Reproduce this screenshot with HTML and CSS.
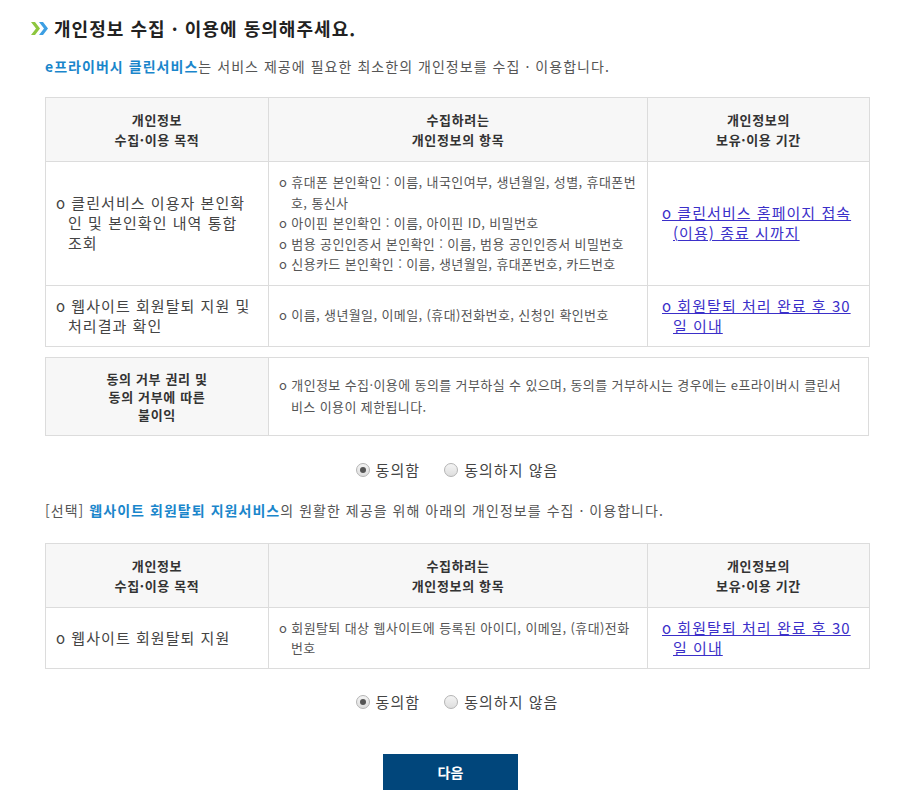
FILE: index.html
```html
<!DOCTYPE html>
<html lang="ko">
<head>
	<meta charset="UTF-8">
	<title>개인정보 수집 · 이용 동의</title>
	<link rel="stylesheet" href="styles.css">
</head>
<body>

	<div class="agree-wrap">
		<h2 class="agree-title">
			<svg class="title-icon" width="17" height="13" viewBox="0 0 17 13">
				<polygon points="0,0 4,0 9,6.5 4,13 0,13 5,6.5" fill="#8dc63f"/>
				<polygon points="8,0 12,0 17,6.5 12,13 8,13 13,6.5" fill="#3d9fe3"/>
			</svg>
			개인정보 수집 · 이용에 동의해주세요.
		</h2>

		<p class="desc"><strong class="point">e프라이버시 클린서비스</strong>는 서비스 제공에 필요한 최소한의 개인정보를 수집 · 이용합니다.</p>

		<table class="tbl-agree">
			<colgroup>
				<col class="col-purpose">
				<col class="col-items">
				<col class="col-period">
			</colgroup>
			<thead>
				<tr>
					<th>개인정보<br>수집·이용 목적</th>
					<th>수집하려는<br>개인정보의 항목</th>
					<th>개인정보의<br>보유·이용 기간</th>
				</tr>
			</thead>
			<tbody>
				<tr>
					<td class="purpose">o 클린서비스 이용자 본인확인 및 본인확인 내역 통합 조회</td>
					<td class="items">
						<p>o 휴대폰 본인확인 : 이름, 내국인여부, 생년월일, 성별, 휴대폰번호, 통신사</p>
						<p>o 아이핀 본인확인 : 이름, 아이핀 ID, 비밀번호</p>
						<p>o 범용 공인인증서 본인확인 : 이름, 범용 공인인증서 비밀번호</p>
						<p>o 신용카드 본인확인 : 이름, 생년월일, 휴대폰번호, 카드번호</p>
					</td>
					<td class="period"><a href="#">o 클린서비스 홈페이지 접속(이용) 종료 시까지</a></td>
				</tr>
				<tr>
					<td class="purpose">o 웹사이트 회원탈퇴 지원 및 처리결과 확인</td>
					<td class="items"><p>o 이름, 생년월일, 이메일, (휴대)전화번호, 신청인 확인번호</p></td>
					<td class="period"><a href="#">o 회원탈퇴 처리 완료 후 30일 이내</a></td>
				</tr>
			</tbody>
		</table>

		<table class="tbl-agree tbl-deny">
			<colgroup>
				<col class="col-purpose">
				<col>
			</colgroup>
			<tr>
				<th>동의 거부 권리 및<br>동의 거부에 따른<br>불이익</th>
				<td class="items"><p>o 개인정보 수집·이용에 동의를 거부하실 수 있으며, 동의를 거부하시는 경우에는 e프라이버시 클린서비스 이용이 제한됩니다.</p></td>
			</tr>
		</table>

		<div class="radio-row">
			<label><input type="radio" name="agree1" checked> 동의함</label>
			<label><input type="radio" name="agree1"> 동의하지 않음</label>
		</div>

		<p class="desc desc-option">[선택] <strong class="point">웹사이트 회원탈퇴 지원서비스</strong>의 원활한 제공을 위해 아래의 개인정보를 수집 · 이용합니다.</p>

		<table class="tbl-agree tbl-option">
			<colgroup>
				<col class="col-purpose">
				<col class="col-items">
				<col class="col-period">
			</colgroup>
			<thead>
				<tr>
					<th>개인정보<br>수집·이용 목적</th>
					<th>수집하려는<br>개인정보의 항목</th>
					<th>개인정보의<br>보유·이용 기간</th>
				</tr>
			</thead>
			<tbody>
				<tr>
					<td class="purpose">o 웹사이트 회원탈퇴 지원</td>
					<td class="items"><p>o 회원탈퇴 대상 웹사이트에 등록된 아이디, 이메일, (휴대)전화번호</p></td>
					<td class="period"><a href="#">o 회원탈퇴 처리 완료 후 30일 이내</a></td>
				</tr>
			</tbody>
		</table>

		<div class="radio-row radio-last">
			<label><input type="radio" name="agree2" checked> 동의함</label>
			<label><input type="radio" name="agree2"> 동의하지 않음</label>
		</div>

		<div class="btn-area">
			<button type="button" class="btn-next">다음</button>
		</div>
	</div>

</body>
</html>
```

FILE: styles.css
```css
body {
	margin: 0;
	font-family: "Noto Sans CJK KR", "Malgun Gothic", sans-serif;
	font-size: 13px;
	letter-spacing: 0.08em;
	color: #555;
	background-color: #fff;
}

.agree-wrap {
	padding-top: 14px;
	padding-bottom: 20px;
}

.agree-title {
	display: flex;
	align-items: center;
	gap: 6px;
	margin: 0 0 0 31px;
	font-size: 18px;
	line-height: 28px;
	font-weight: bold;
	color: #222;
}

.title-icon {
	flex-shrink: 0;
}

.desc {
	margin: 14px 0 0 45px;
	font-size: 14px;
	line-height: 20px;
}

.desc-option {
	margin-top: 20px;
}

.point {
	color: #1a86cb;
}

.tbl-agree {
	width: 824px;
	margin: 21px 0 0 45px;
	border-collapse: collapse;
	table-layout: fixed;
}

.col-purpose {
	width: 223px;
}

.col-items {
	width: 379px;
}

.col-period {
	width: 222px;
}

.tbl-agree th,
.tbl-agree td {
	border: 1px solid #dcdcdc;
	vertical-align: middle;
}

.tbl-agree th {
	padding: 12px 12px 11px;
	background-color: #f7f7f7;
	font-size: 13px;
	line-height: 20px;
	font-weight: bold;
	letter-spacing: 0.05em;
	color: #333;
	text-align: center;
}

.purpose {
	padding: 10px 14px 10px 22px;
	text-indent: -12px;
	font-size: 15px;
	line-height: 20px;
	color: #444;
}

.items {
	padding: 10px 6px 10px 22px;
	line-height: 20.5px;
	letter-spacing: 0.03em;
	color: #555;
}

.items p {
	margin: 0;
	text-indent: -12px;
}

.period {
	padding: 10px 12px 10px 25px;
	text-indent: -11px;
	font-size: 15px;
	line-height: 20px;
}

.period a {
	color: #3b2fc9;
	text-decoration: underline;
}

.tbl-deny {
	margin-top: 10px;
}

.tbl-deny th {
	padding: 12px 12px 11px;
	line-height: 18px;
}

.tbl-deny .items {
	padding-right: 20px;
	line-height: 22px;
}

.tbl-option {
	margin-top: 23px;
}

.tbl-option .items {
	line-height: 20px;
}

.radio-row {
	display: flex;
	justify-content: center;
	gap: 24px;
	width: 824px;
	margin: 24px 0 0 45px;
	font-size: 15px;
	line-height: 20px;
	color: #444;
}

.radio-last {
	margin-top: 23px;
}

.radio-row label {
	display: flex;
	align-items: center;
	gap: 6px;
	cursor: pointer;
}

.radio-row input[type="radio"] {
	appearance: none;
	-webkit-appearance: none;
	width: 14px;
	height: 14px;
	margin: 0;
	border: 1px solid #b4b4b4;
	border-radius: 50%;
	background: linear-gradient(#f4f4f4, #dedede);
	position: relative;
}

.radio-row input[type="radio"]:checked::after {
	content: "";
	position: absolute;
	left: 3px;
	top: 3px;
	width: 6px;
	height: 6px;
	border-radius: 50%;
	background-color: #555;
}

.btn-area {
	margin: 42px 0 0 383px;
}

.btn-next {
	width: 135px;
	height: 36px;
	border: none;
	background-color: #01467b;
	color: #fff;
	font-family: inherit;
	font-size: 14px;
	font-weight: bold;
	letter-spacing: 0;
	cursor: pointer;
}
```
